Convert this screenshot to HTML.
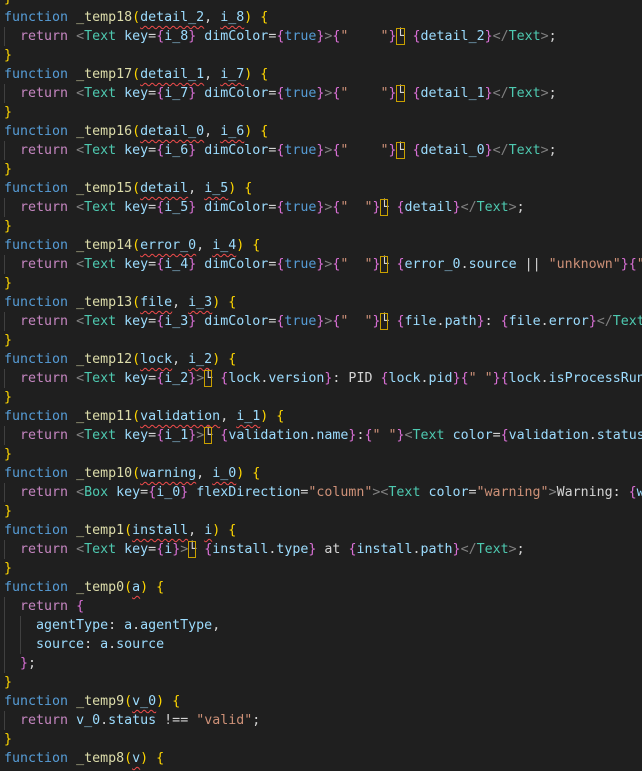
<!DOCTYPE html>
<html><head><meta charset="utf-8"><style>
html,body{margin:0;padding:0;background:#1f1f1f;width:642px;height:771px;overflow:hidden}
pre{margin:0;position:absolute;left:4px;top:-11px;font-family:"DejaVu Sans Mono","Liberation Mono",monospace;font-size:13.3px;line-height:19px;color:#d4d4d4;white-space:pre}
.k{color:#569cd6}.f{color:#dcdcaa}.p{color:#9cdcfe}.r{color:#c586c0}.t{color:#4ec9b0}.g{color:#808080}
.y{color:#ffd700}.m{color:#da70d6}.s{color:#ce9178}
.q{text-decoration:underline wavy #f14c4c;text-decoration-thickness:1px;text-underline-offset:4px}
.b{display:inline-block;line-height:17px;outline:1px solid #c9a000;outline-offset:-1px}
.ig{position:absolute;width:1px;height:19px;background:#404040}
</style></head><body>
<div id="g"></div>
<pre><span class="y">}</span>
<span class="k">function</span> <span class="f">_temp18</span><span class="y">(</span><span class="p q">detail_2</span>, <span class="p q">i_8</span><span class="y">)</span> <span class="y">{</span>
  <span class="r">return</span> <span class="g">&lt;</span><span class="t">Text</span> <span class="p">key</span>=<span class="m">{</span><span class="p">i_8</span><span class="m">}</span> <span class="p">dimColor</span>=<span class="m">{</span><span class="k">true</span><span class="m">}</span><span class="g">&gt;</span><span class="m">{</span><span class="s">"    "</span><span class="m">}</span><span class="b">└</span> <span class="m">{</span><span class="p">detail_2</span><span class="m">}</span><span class="g">&lt;/</span><span class="t">Text</span><span class="g">&gt;</span>;
<span class="y">}</span>
<span class="k">function</span> <span class="f">_temp17</span><span class="y">(</span><span class="p q">detail_1</span>, <span class="p q">i_7</span><span class="y">)</span> <span class="y">{</span>
  <span class="r">return</span> <span class="g">&lt;</span><span class="t">Text</span> <span class="p">key</span>=<span class="m">{</span><span class="p">i_7</span><span class="m">}</span> <span class="p">dimColor</span>=<span class="m">{</span><span class="k">true</span><span class="m">}</span><span class="g">&gt;</span><span class="m">{</span><span class="s">"    "</span><span class="m">}</span><span class="b">└</span> <span class="m">{</span><span class="p">detail_1</span><span class="m">}</span><span class="g">&lt;/</span><span class="t">Text</span><span class="g">&gt;</span>;
<span class="y">}</span>
<span class="k">function</span> <span class="f">_temp16</span><span class="y">(</span><span class="p q">detail_0</span>, <span class="p q">i_6</span><span class="y">)</span> <span class="y">{</span>
  <span class="r">return</span> <span class="g">&lt;</span><span class="t">Text</span> <span class="p">key</span>=<span class="m">{</span><span class="p">i_6</span><span class="m">}</span> <span class="p">dimColor</span>=<span class="m">{</span><span class="k">true</span><span class="m">}</span><span class="g">&gt;</span><span class="m">{</span><span class="s">"    "</span><span class="m">}</span><span class="b">└</span> <span class="m">{</span><span class="p">detail_0</span><span class="m">}</span><span class="g">&lt;/</span><span class="t">Text</span><span class="g">&gt;</span>;
<span class="y">}</span>
<span class="k">function</span> <span class="f">_temp15</span><span class="y">(</span><span class="p q">detail</span>, <span class="p q">i_5</span><span class="y">)</span> <span class="y">{</span>
  <span class="r">return</span> <span class="g">&lt;</span><span class="t">Text</span> <span class="p">key</span>=<span class="m">{</span><span class="p">i_5</span><span class="m">}</span> <span class="p">dimColor</span>=<span class="m">{</span><span class="k">true</span><span class="m">}</span><span class="g">&gt;</span><span class="m">{</span><span class="s">"  "</span><span class="m">}</span><span class="b">└</span> <span class="m">{</span><span class="p">detail</span><span class="m">}</span><span class="g">&lt;/</span><span class="t">Text</span><span class="g">&gt;</span>;
<span class="y">}</span>
<span class="k">function</span> <span class="f">_temp14</span><span class="y">(</span><span class="p q">error_0</span>, <span class="p q">i_4</span><span class="y">)</span> <span class="y">{</span>
  <span class="r">return</span> <span class="g">&lt;</span><span class="t">Text</span> <span class="p">key</span>=<span class="m">{</span><span class="p">i_4</span><span class="m">}</span> <span class="p">dimColor</span>=<span class="m">{</span><span class="k">true</span><span class="m">}</span><span class="g">&gt;</span><span class="m">{</span><span class="s">"  "</span><span class="m">}</span><span class="b">└</span> <span class="m">{</span><span class="p">error_0</span>.<span class="p">source</span> || <span class="s">"unknown"</span><span class="m">}{</span><span class="s">"</span>
<span class="y">}</span>
<span class="k">function</span> <span class="f">_temp13</span><span class="y">(</span><span class="p q">file</span>, <span class="p q">i_3</span><span class="y">)</span> <span class="y">{</span>
  <span class="r">return</span> <span class="g">&lt;</span><span class="t">Text</span> <span class="p">key</span>=<span class="m">{</span><span class="p">i_3</span><span class="m">}</span> <span class="p">dimColor</span>=<span class="m">{</span><span class="k">true</span><span class="m">}</span><span class="g">&gt;</span><span class="m">{</span><span class="s">"  "</span><span class="m">}</span><span class="b">└</span> <span class="m">{</span><span class="p">file</span>.<span class="p">path</span><span class="m">}</span>: <span class="m">{</span><span class="p">file</span>.<span class="p">error</span><span class="m">}</span><span class="g">&lt;/</span><span class="t">Text</span>
<span class="y">}</span>
<span class="k">function</span> <span class="f">_temp12</span><span class="y">(</span><span class="p q">lock</span>, <span class="p q">i_2</span><span class="y">)</span> <span class="y">{</span>
  <span class="r">return</span> <span class="g">&lt;</span><span class="t">Text</span> <span class="p">key</span>=<span class="m">{</span><span class="p">i_2</span><span class="m">}</span><span class="g">&gt;</span><span class="b">└</span> <span class="m">{</span><span class="p">lock</span>.<span class="p">version</span><span class="m">}</span>: PID <span class="m">{</span><span class="p">lock</span>.<span class="p">pid</span><span class="m">}{</span><span class="s">" "</span><span class="m">}{</span><span class="p">lock</span>.<span class="p">isProcessRun</span>
<span class="y">}</span>
<span class="k">function</span> <span class="f">_temp11</span><span class="y">(</span><span class="p q">validation</span>, <span class="p q">i_1</span><span class="y">)</span> <span class="y">{</span>
  <span class="r">return</span> <span class="g">&lt;</span><span class="t">Text</span> <span class="p">key</span>=<span class="m">{</span><span class="p">i_1</span><span class="m">}</span><span class="g">&gt;</span><span class="b">└</span> <span class="m">{</span><span class="p">validation</span>.<span class="p">name</span><span class="m">}</span>:<span class="m">{</span><span class="s">" "</span><span class="m">}</span><span class="g">&lt;</span><span class="t">Text</span> <span class="p">color</span>=<span class="m">{</span><span class="p">validation</span>.<span class="p">status</span>
<span class="y">}</span>
<span class="k">function</span> <span class="f">_temp10</span><span class="y">(</span><span class="p q">warning</span>, <span class="p q">i_0</span><span class="y">)</span> <span class="y">{</span>
  <span class="r">return</span> <span class="g">&lt;</span><span class="t">Box</span> <span class="p">key</span>=<span class="m">{</span><span class="p">i_0</span><span class="m">}</span> <span class="p">flexDirection</span>=<span class="s">"column"</span><span class="g">&gt;&lt;</span><span class="t">Text</span> <span class="p">color</span>=<span class="s">"warning"</span><span class="g">&gt;</span>Warning: <span class="m">{</span><span class="p">w</span>
<span class="y">}</span>
<span class="k">function</span> <span class="f">_temp1</span><span class="y">(</span><span class="p q">install</span>, <span class="p q">i</span><span class="y">)</span> <span class="y">{</span>
  <span class="r">return</span> <span class="g">&lt;</span><span class="t">Text</span> <span class="p">key</span>=<span class="m">{</span><span class="p">i</span><span class="m">}</span><span class="g">&gt;</span><span class="b">└</span> <span class="m">{</span><span class="p">install</span>.<span class="p">type</span><span class="m">}</span> at <span class="m">{</span><span class="p">install</span>.<span class="p">path</span><span class="m">}</span><span class="g">&lt;/</span><span class="t">Text</span><span class="g">&gt;</span>;
<span class="y">}</span>
<span class="k">function</span> <span class="f">_temp0</span><span class="y">(</span><span class="p q">a</span><span class="y">)</span> <span class="y">{</span>
  <span class="r">return</span> <span class="m">{</span>
    <span class="p">agentType</span>: <span class="p">a</span>.<span class="p">agentType</span>,
    <span class="p">source</span>: <span class="p">a</span>.<span class="p">source</span>
  <span class="m">}</span>;
<span class="y">}</span>
<span class="k">function</span> <span class="f">_temp9</span><span class="y">(</span><span class="p q">v_0</span><span class="y">)</span> <span class="y">{</span>
  <span class="r">return</span> <span class="p">v_0</span>.<span class="p">status</span> !== <span class="s">"valid"</span>;
<span class="y">}</span>
<span class="k">function</span> <span class="f">_temp8</span><span class="y">(</span><span class="p q">v</span><span class="y">)</span> <span class="y">{</span>
</pre>
<script>
var g=document.getElementById('g');
function ig(line,x){var d=document.createElement('div');d.className='ig';d.style.left=x+'px';d.style.top=(-11+19*line)+'px';g.appendChild(d);}
[2,5,8,11,14,17,20,23,26,29,32,33,34,35,38].forEach(function(l){ig(l,4)});
[33,34].forEach(function(l){ig(l,20)});
</script>
</body></html>
